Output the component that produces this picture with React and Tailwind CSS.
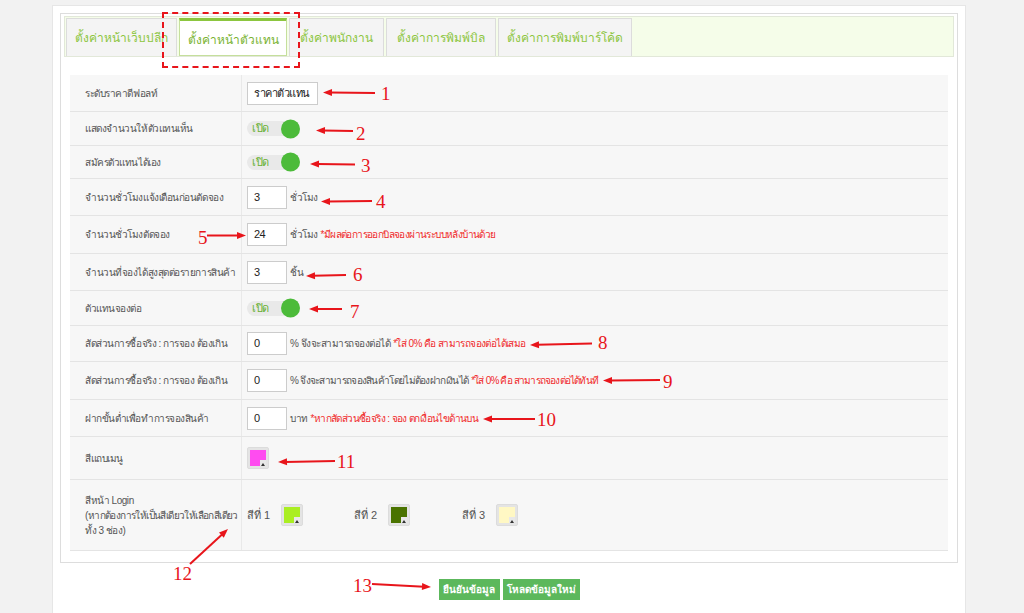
import React from "react";

const font = { fontFamily: '"Liberation Sans", "DejaVu Sans", sans-serif' };

const tabs = [
  { label: "ตั้งค่าหน้าเว็บปลีก", w: "w-[111px]" },
  { label: "ตั้งค่าหน้าตัวแทน", w: "w-[108px]", active: true },
  { label: "ตั้งค่าพนักงาน", w: "w-[95px]" },
  { label: "ตั้งค่าการพิมพ์บิล", w: "w-[110px]" },
  { label: "ตั้งค่าการพิมพ์บาร์โค้ด", w: "w-[134px]" },
];

function Toggle() {
  return (
    <div className="relative flex items-center w-[53px] h-[15px] rounded-full bg-[#e9e9e9]">
      <span className="pl-[5px] text-[11px] leading-none text-[#66b032]">เปิด</span>
      <span className="absolute right-0 top-1/2 -translate-y-1/2 w-[19px] h-[19px] rounded-full bg-[#4cbb3a]" />
    </div>
  );
}

function Input({ value, wide }) {
  return (
    <div
      className={`flex items-center shrink-0 h-[23px] bg-white border border-[#cccccc] pl-[6px] text-[11px] text-[#222] ${
        wide ? "w-[71px]" : "w-[40px]"
      }`}
    >
      {value}
    </div>
  );
}

function Swatch({ color }) {
  return (
    <div className="relative shrink-0 w-[22px] h-[22px] rounded-[2px] bg-[#e4e4e4] border border-[#dcdcdc] p-[2px]">
      <div className="w-full h-full" style={{ background: color }} />
      <div className="absolute right-[2px] bottom-[2px] w-[6px] h-[6px] bg-[#e8e8e8] flex items-end justify-center">
        <div className="w-0 h-0 border-l-[2px] border-r-[2px] border-b-[3px] border-l-transparent border-r-transparent border-b-[#333]" />
      </div>
    </div>
  );
}

function Row({ label, h, children }) {
  return (
    <div className={`flex border-b border-[#e4e4e4] ${h}`}>
      <div className="w-[172px] shrink-0 overflow-hidden border-r border-[#e9e9e9] pl-[15px] flex items-center whitespace-nowrap text-[10px] tracking-[-0.45px] leading-[15px] text-[#555]">
        <div>{label}</div>
      </div>
      <div className="flex-1 flex items-center pl-[5px] gap-[3px] whitespace-nowrap text-[10px] tracking-[-0.5px] text-[#555]">
        {children}
      </div>
    </div>
  );
}

const Red = ({ children, tight }) => (
  <span className={`ml-[3px] text-[#f02a2a] ${tight ? "tracking-[-0.8px]" : "tracking-[-0.6px]"}`}>
    {children}
  </span>
);

const arrows = [
  [375, 93, 323, 92.5],
  [353, 131, 316, 130.5],
  [355, 164.5, 310, 164],
  [372, 201, 321, 201.5],
  [207, 235.5, 246, 235.5],
  [346, 275, 306, 276],
  [342, 309, 309, 309],
  [592, 343.5, 530, 345],
  [660, 380, 603, 380.5],
  [535, 419, 483, 419],
  [335, 461, 278, 462],
  [190, 564, 228, 529],
  [372, 584, 431, 587],
];

const numbers = [
  ["1", 381, 100],
  ["2", 356, 140],
  ["3", 361, 172],
  ["4", 376, 208],
  ["5", 198, 244],
  ["6", 353, 281],
  ["7", 350, 318],
  ["8", 598, 349],
  ["9", 663, 388],
  ["10", 537, 426],
  ["11", 337, 468],
  ["12", 173, 580],
  ["13", 353, 592],
];

function head(x1, y1, x2, y2) {
  const dx = x2 - x1;
  const dy = y2 - y1;
  const len = Math.hypot(dx, dy);
  const ux = dx / len;
  const uy = dy / len;
  const bx = x2 - ux * 9;
  const by = y2 - uy * 9;
  const px = -uy * 3.5;
  const py = ux * 3.5;
  return `${x2},${y2} ${bx + px},${by + py} ${bx - px},${by - py}`;
}

function Annotations() {
  return (
    <svg className="absolute left-0 top-0 pointer-events-none" width="1024" height="613">
      {arrows.map(([x1, y1, x2, y2], i) => {
        const len = Math.hypot(x2 - x1, y2 - y1);
        const ex = x2 - ((x2 - x1) / len) * 7;
        const ey = y2 - ((y2 - y1) / len) * 7;
        return (
          <g key={i}>
            <line x1={x1} y1={y1} x2={ex} y2={ey} stroke="#e8151b" strokeWidth="2" />
            <polygon points={head(x1, y1, x2, y2)} fill="#e8151b" />
          </g>
        );
      })}
      {numbers.map(([t, x, y], i) => (
        <text
          key={i}
          x={x}
          y={y}
          fill="#e8151b"
          fontSize="19"
          fontFamily='"Liberation Serif", serif'
        >
          {t}
        </text>
      ))}
    </svg>
  );
}

export default function App() {
  return (
    <div className="relative min-h-screen h-[613px] overflow-hidden bg-[#f2f2f2]" style={font}>
      <div className="ml-[52px] mt-[5px] w-[914px] h-[620px] bg-white border border-[#e6e6e6] pt-[7px] px-[7px]">
        {/* main box */}
        <div className="border border-[#dddddd] px-[3px] pt-[2px] pb-[11px]">
          {/* tab bar */}
          <div className="h-[41px] bg-[#f5fde9] border border-[#e2e8d9] flex items-end pl-[1px] gap-[2px]">
            {tabs.map((t, i) =>
              t.active ? (
                <div
                  key={i}
                  className={`${t.w} h-[38px] bg-white border border-[#c5df9c] border-t-[3px] border-t-[#8cc63f] flex items-center justify-center pt-[3px] text-[12px] text-[#7ab332]`}
                >
                  {t.label}
                </div>
              ) : (
                <div
                  key={i}
                  className={`${t.w} h-[38px] bg-[#f4f4f4] border border-[#dcdcdc] border-b-0 flex items-center justify-center text-[12px] text-[#8dc63f]`}
                >
                  {t.label}
                </div>
              )
            )}
          </div>

          {/* settings table */}
          <div className="mt-[18px] mx-[6px] bg-[#f7f7f7]">
            <Row label="ระดับราคาดีฟอลท์" h="h-[37px]">
              <Input value="ราคาตัวแทน" wide />
            </Row>
            <Row label="แสดงจำนวนให้ตัวแทนเห็น" h="h-[34px]">
              <Toggle />
            </Row>
            <Row label="สมัครตัวแทนได้เอง" h="h-[33px]">
              <Toggle />
            </Row>
            <Row label="จำนวนชั่วโมงแจ้งเตือนก่อนตัดจอง" h="h-[37px]">
              <Input value="3" />
              <span>ชั่วโมง</span>
            </Row>
            <Row label="จำนวนชั่วโมงตัดจอง" h="h-[38px]">
              <Input value="24" />
              <span>
                ชั่วโมง<Red>*มีผลต่อการออกบิลจองผ่านระบบหลังบ้านด้วย</Red>
              </span>
            </Row>
            <Row label="จำนวนที่จองได้สูงสุดต่อรายการสินค้า" h="h-[37px]">
              <Input value="3" />
              <span>ชิ้น</span>
            </Row>
            <Row label="ตัวแทนจองต่อ" h="h-[35px]">
              <Toggle />
            </Row>
            <Row label="สัดส่วนการซื้อจริง : การจอง ต้องเกิน" h="h-[36px]">
              <Input value="0" />
              <span>
                % จึงจะสามารถจองต่อได้<Red>*ใส่ 0% คือ สามารถจองต่อได้เสมอ</Red>
              </span>
            </Row>
            <Row label="สัดส่วนการซื้อจริง : การจอง ต้องเกิน" h="h-[38px]">
              <Input value="0" />
              <span className="tracking-[-0.7px]">
                % จึงจะสามารถจองสินค้าโดยไม่ต้องฝากเงินได้
                <Red tight>*ใส่ 0% คือ สามารถจองต่อได้ทันที</Red>
              </span>
            </Row>
            <Row label="ฝากขั้นต่ำเพื่อทำการจองสินค้า" h="h-[37px]">
              <Input value="0" />
              <span>
                บาท<Red>*หากสัดส่วนซื้อจริง : จอง ตกเงื่อนไขด้านบน</Red>
              </span>
            </Row>
            <Row label="สีแถบเมนู" h="h-[43px]">
              <Swatch color="#ff4cf0" />
            </Row>
            <Row
              label={
                <>
                  สีหน้า Login
                  <br />
                  <span className="tracking-[-0.6px]">
                    (หากต้องการให้เป็นสีเดียวให้เลือกสีเดียว
                  </span>
                  <br />
                  ทั้ง 3 ช่อง)
                </>
              }
              h="h-[71px]"
            >
              <div className="flex items-center text-[11px] tracking-normal">
                <span className="w-[34px]">สีที่ 1</span>
                <Swatch color="#aaee22" />
                <span className="w-[51px]" />
                <span className="w-[34px]">สีที่ 2</span>
                <Swatch color="#4a7300" />
                <span className="w-[52px]" />
                <span className="w-[34px]">สีที่ 3</span>
                <Swatch color="#fff8c4" />
              </div>
            </Row>
          </div>
        </div>

        {/* buttons */}
        <div className="flex justify-center gap-[3px] mt-[16px]">
          <button className="h-[21px] w-[61px] bg-[#5cb85c] text-white text-[10px] font-bold">
            ยืนยันข้อมูล
          </button>
          <button className="h-[21px] w-[77px] bg-[#5cb85c] text-white text-[10px] font-bold">
            โหลดข้อมูลใหม่
          </button>
        </div>
      </div>

      {/* dashed highlight around active tab */}
      <div className="absolute left-[162px] top-[12px] w-[138px] h-[56px] border-2 border-dashed border-[#e8151b] pointer-events-none" />

      <Annotations />
    </div>
  );
}
